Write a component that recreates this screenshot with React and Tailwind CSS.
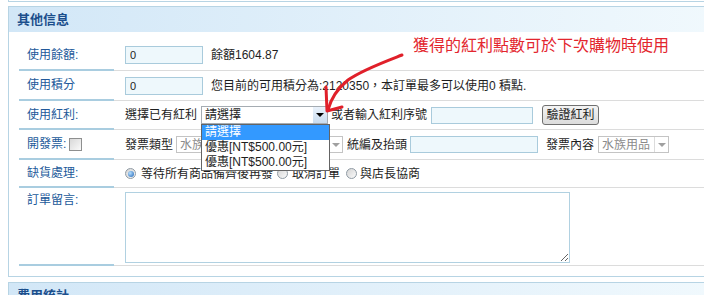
import React from 'react';

const Row = ({ label, h, top, children }) => (
  <div className={`flex ${h}`}>
    <div
      className={`w-[95px] shrink-0 border-b-2 border-[#a9cde0] pl-2 flex text-[#22599a] ${
        top ? 'items-start pt-[3px]' : 'items-center'
      }`}
    >
      {label}
    </div>
    <div className={`flex-1 border-b border-[#dcdcdc] pl-[11px] flex ${top ? 'items-start pt-[4px]' : 'items-center'}`}>
      {children}
    </div>
  </div>
);

const Header = ({ title }) => (
  <div className="h-[25px] bg-gradient-to-r from-[#d2e7f7] to-[#f1f9fd] pl-2 flex items-center text-[13px] font-bold text-[#1b4e8c]">
    {title}
  </div>
);

const Radio = ({ checked }) => (
  <span className="w-[11px] h-[11px] rounded-full border border-[#8f9aa3] bg-gradient-to-br from-[#d4d4d4] to-[#fbfbfb] flex items-center justify-center shrink-0">
    {checked && (
      <span className="w-[6px] h-[6px] rounded-full bg-[radial-gradient(circle_at_35%_35%,#b6e0ff,#1d62b5)]" />
    )}
  </span>
);

const GraySelect = ({ w, text }) => (
  <div className={`${w} h-[17px] border border-[#c4c4c4] bg-white flex items-center text-[#8a8a8a]`}>
    <span className="flex-1 pl-[3px] leading-none">{text}</span>
    <span className="w-[14px] h-full border-l border-[#dcdcdc] flex items-center justify-center">
      <span className="w-0 h-0 border-l-[4px] border-r-[4px] border-t-[4px] border-l-transparent border-r-transparent border-t-[#a0a0a0]" />
    </span>
  </div>
);

export default function App() {
  return (
    <div className="relative w-[704px] h-[295px] overflow-hidden bg-white font-['Liberation_Sans','Noto_Sans_CJK_TC',sans-serif] text-[12px] text-[#1e1e1e]">
      {/* bottom of the previous panel */}
      <div className="ml-2 w-[720px] h-[2px] border-l border-b border-[#b7d4e4]" />

      <div className="ml-2 mt-1 w-[720px] border border-[#b7d4e4]">
        <Header title="其他信息" />
        <div className="pt-2 pb-[10px] pl-[10px]">
          <Row label="使用餘額:" h="h-[31px]">
            <input
              readOnly
              defaultValue="0"
              className="w-[78px] h-[18px] border border-[#a9cbdc] bg-[#eef8fc] pl-[4px] text-[11px] outline-none"
            />
            <span className="ml-2">餘額1604.87</span>
          </Row>

          <Row label="使用積分" h="h-[30px]">
            <input
              readOnly
              defaultValue="0"
              className="w-[78px] h-[18px] border border-[#a9cbdc] bg-[#eef8fc] pl-[4px] text-[11px] outline-none"
            />
            <span className="ml-2">您目前的可用積分為:2120350，本訂單最多可以使用0 積點.</span>
          </Row>

          <Row label="使用紅利:" h="h-[29px]">
            <span>選擇已有紅利</span>
            <div className="relative ml-1">
              <div className="w-[127px] h-[18px] border border-[#a5acb2] bg-white flex items-center">
                <span className="flex-1 pl-[3px] leading-none">請選擇</span>
                <span className="w-[14px] h-full bg-gradient-to-b from-[#eaf2fb] to-[#c9dcef] flex items-center justify-center">
                  <span className="w-0 h-0 border-l-[4px] border-r-[4px] border-t-[4px] border-l-transparent border-r-transparent border-t-black" />
                </span>
              </div>
              <div className="absolute left-0 top-full w-[129px] border border-[#646464] bg-white z-10 leading-[15px]">
                <div className="bg-[#3399ff] text-white pl-[3px]">請選擇</div>
                <div className="pl-[3px]">優惠[NT$500.00元]</div>
                <div className="pl-[3px]">優惠[NT$500.00元]</div>
              </div>
            </div>
            <span className="ml-[3px]">或者輸入紅利序號</span>
            <input
              readOnly
              className="ml-1 w-[102px] h-[17px] border border-[#a9cbdc] bg-[#eef8fc] outline-none"
            />
            <button className="ml-[9px] w-[57px] h-[20px] rounded-[3px] border border-[#707070] bg-gradient-to-b from-[#f4f4f4] to-[#dcdcdc] text-[12px] leading-none">
              驗證紅利
            </button>
          </Row>

          <Row
            label={
              <span className="flex items-center">
                開發票:
                <span className="ml-[3px] w-[13px] h-[13px] border border-[#8e8f8f] bg-gradient-to-br from-[#d8d8d8] to-[#fafafa]" />
              </span>
            }
            h="h-[30px]"
          >
            <span>發票類型</span>
            <div className="ml-[3px]">
              <GraySelect w="w-[167px]" text="水族用品" />
            </div>
            <span className="ml-1">統編及抬頭</span>
            <input
              readOnly
              className="ml-[3px] w-[128px] h-[17px] border border-[#a9cbdc] bg-[#eef8fc] outline-none"
            />
            <span className="ml-2">發票內容</span>
            <div className="ml-1">
              <GraySelect w="w-[71px]" text="水族用品" />
            </div>
          </Row>

          <Row label="缺貨處理:" h="h-[28px]">
            <Radio checked />
            <span className="ml-[5px]">等待所有商品備齊後再發</span>
            <span className="ml-[4px]">
              <Radio />
            </span>
            <span className="ml-[4px]">取消訂單</span>
            <span className="ml-[6px]">
              <Radio />
            </span>
            <span className="ml-[3px]">與店長協商</span>
          </Row>

          <Row label="訂單留言:" h="h-[78px]" top>
            <textarea readOnly className="w-[445px] h-[71px] border border-[#b1d1e1] bg-white outline-none" />
          </Row>
        </div>
      </div>

      <div className="ml-2 mt-[5px] w-[720px] border border-[#b7d4e4]">
        <Header title="費用統計" />
      </div>

      {/* annotation */}
      <div className="absolute left-[413px] top-[35px] text-[16px] text-[#e3262e] leading-[22px] whitespace-nowrap">
        獲得的紅利點數可於下次購物時使用
      </div>
      <svg className="absolute left-0 top-0 pointer-events-none" width="704" height="295" viewBox="0 0 704 295">
        <path
          d="M402 55 C 384 62 362 70 348 80 C 337 89 331 98 328 110"
          fill="none"
          stroke="#e0202a"
          strokeWidth="3"
          strokeLinecap="round"
        />
        <path
          d="M326 87 L 327 111 L 342 107"
          fill="none"
          stroke="#e0202a"
          strokeWidth="3"
          strokeLinecap="round"
          strokeLinejoin="round"
        />
      </svg>
    </div>
  );
}
